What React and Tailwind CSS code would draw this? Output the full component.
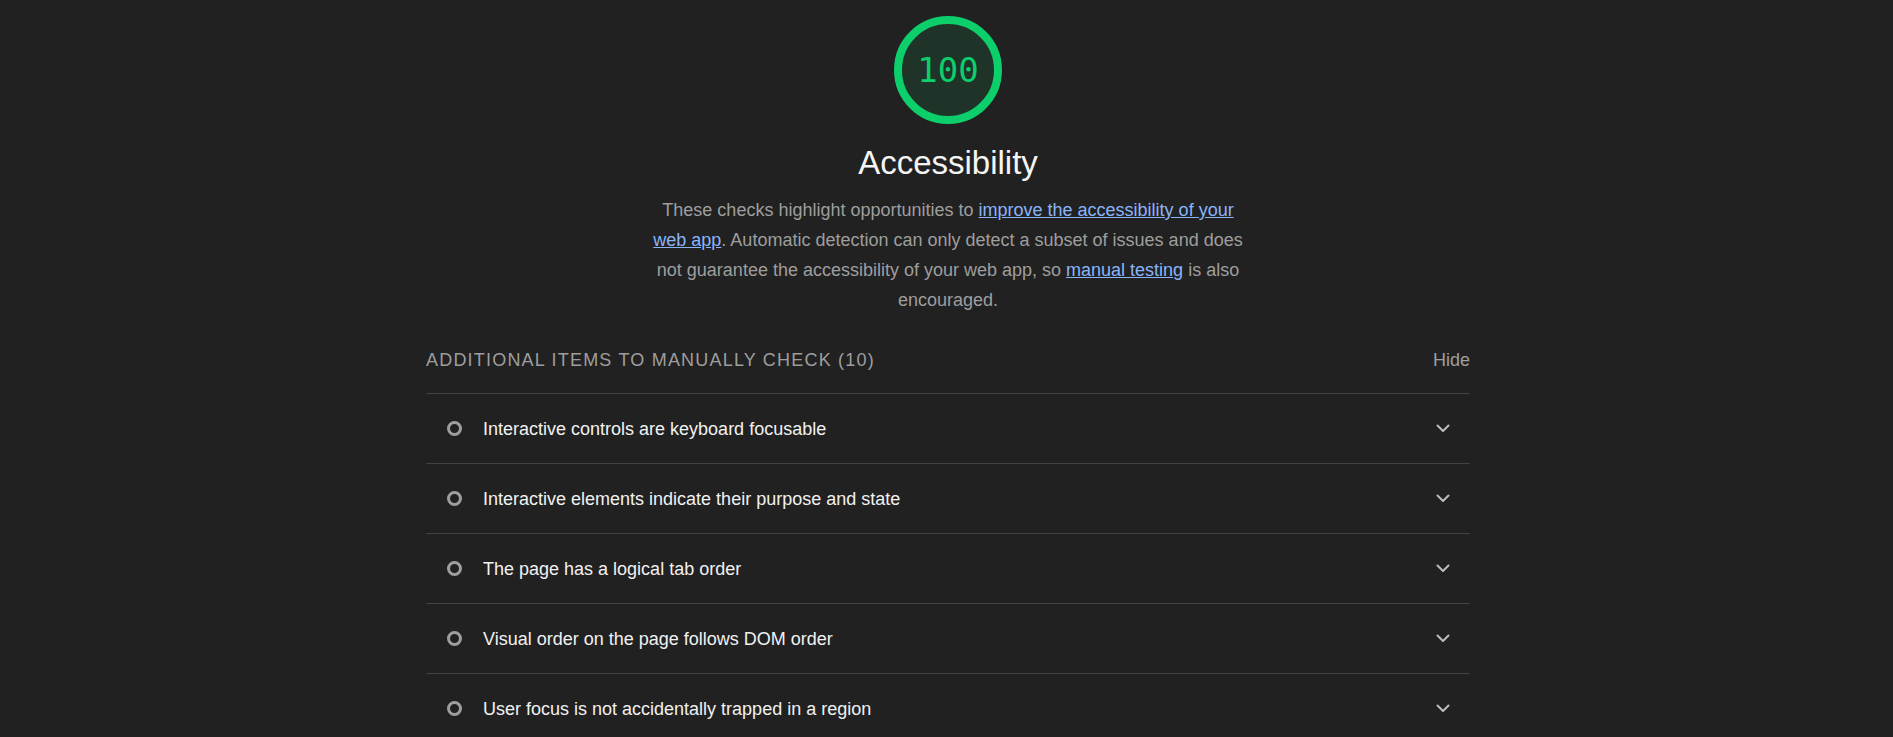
const items = [
  'Interactive controls are keyboard focusable',
  'Interactive elements indicate their purpose and state',
  'The page has a logical tab order',
  'Visual order on the page follows DOM order',
  'User focus is not accidentally trapped in a region',
  'The user\'s focus is directed to new content added to the page',
]

function Gauge({ score }) {
  return (
    <svg width="108" height="108" viewBox="0 0 108 108" className="block">
      <circle cx="54" cy="54" r="50" fill="#1f3329" stroke="#0cce6b" strokeWidth="8" />
      <text
        x="54"
        y="54"
        textAnchor="middle"
        dominantBaseline="central"
        fill="#0cce6b"
        fontSize="34"
        fontFamily="'DejaVu Sans Mono', monospace"
      >
        {score}
      </text>
    </svg>
  )
}

function Chevron() {
  return (
    <svg width="14" height="9" viewBox="0 0 14 9" fill="none" className="block">
      <path d="M1.5 1.5 L7 7 L12.5 1.5" stroke="#bdbdbd" strokeWidth="2" strokeLinecap="round" strokeLinejoin="round" />
    </svg>
  )
}

function AuditRow({ title }) {
  return (
    <div className="flex items-center h-[70px] border-b border-[#424242] pl-[21px] pr-[20px]">
      <span className="w-[15px] h-[15px] rounded-full border-[3px] border-[#9e9e9e] shrink-0" />
      <span className="ml-[21px] flex-1 text-[18px] leading-[24px] text-[#f1f1f1]">{title}</span>
      <Chevron />
    </div>
  )
}

export default function App() {
  return (
    <div className="h-screen bg-[#212121] font-['Liberation_Sans',Arial,sans-serif] overflow-hidden pl-[3px]">
      <div className="w-[1044px] mx-auto pt-[16px]">
        <div className="flex flex-col items-center">
          <Gauge score="100" />
          <h1 className="mt-[19px] text-[33px] leading-[40px] text-[#f5f5f5]">Accessibility</h1>
          <p className="mt-[12px] w-[600px] text-center text-[18px] leading-[30px] text-[#9e9e9e]">
            These checks highlight opportunities to{' '}
            <a className="text-[#8ab4f8] underline">improve the accessibility of your web app</a>. Automatic
            detection can only detect a subset of issues and does not guarantee the accessibility of your web
            app, so <a className="text-[#8ab4f8] underline">manual testing</a> is also encouraged.
          </p>
        </div>

        <div className="mt-[33px] flex items-center justify-between pb-[21px] border-b border-[#424242]">
          <span className="text-[18px] leading-[24px] tracking-[1.2px] uppercase text-[#9e9e9e]">
            Additional items to manually check (10)
          </span>
          <span className="text-[18px] leading-[24px] text-[#9e9e9e]">Hide</span>
        </div>

        <div className="flex flex-col">
          {items.map((t) => (
            <AuditRow key={t} title={t} />
          ))}
        </div>
      </div>
    </div>
  )
}
